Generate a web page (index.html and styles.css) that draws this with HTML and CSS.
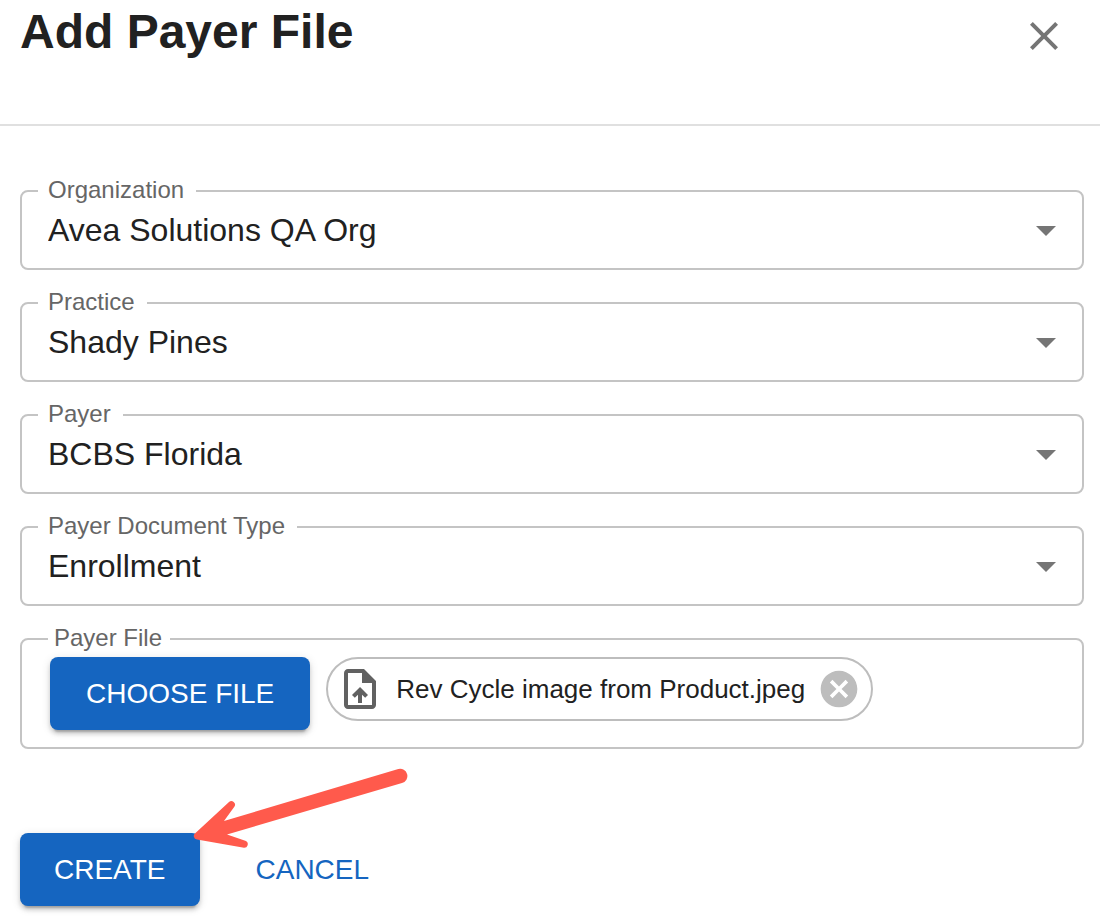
FILE: index.html
```html
<!DOCTYPE html>
<html lang="en">
<head>
  <meta charset="UTF-8">
  <meta name="viewport" content="width=device-width, initial-scale=1.0">
  <title>Add Payer File</title>
  <link rel="stylesheet" href="styles.css">
</head>
<body>
  <header>
    <h1>Add Payer File</h1>
    <button type="button" class="icon-btn" aria-label="Close">
      <svg class="icon" viewBox="0 0 24 24"><path d="M19 6.41L17.59 5 12 10.59 6.41 5 5 6.41 10.59 12 5 17.59 6.41 19 12 13.41 17.59 19 19 17.59 13.41 12z"/></svg>
    </button>
  </header>

  <form>
    <fieldset class="field">
      <legend><label for="organization">Organization</label></legend>
      <div class="select">
        <select id="organization">
          <option selected>Avea Solutions QA Org</option>
        </select>
        <svg class="icon" viewBox="0 0 24 24"><path d="M7 10l5 5 5-5z"/></svg>
      </div>
    </fieldset>

    <fieldset class="field">
      <legend><label for="practice">Practice</label></legend>
      <div class="select">
        <select id="practice">
          <option selected>Shady Pines</option>
        </select>
        <svg class="icon" viewBox="0 0 24 24"><path d="M7 10l5 5 5-5z"/></svg>
      </div>
    </fieldset>

    <fieldset class="field">
      <legend><label for="payer">Payer</label></legend>
      <div class="select">
        <select id="payer">
          <option selected>BCBS Florida</option>
        </select>
        <svg class="icon" viewBox="0 0 24 24"><path d="M7 10l5 5 5-5z"/></svg>
      </div>
    </fieldset>

    <fieldset class="field">
      <legend><label for="doc-type">Payer Document Type</label></legend>
      <div class="select">
        <select id="doc-type">
          <option selected>Enrollment</option>
        </select>
        <svg class="icon" viewBox="0 0 24 24"><path d="M7 10l5 5 5-5z"/></svg>
      </div>
    </fieldset>

    <fieldset class="field file-field">
      <legend>Payer File</legend>
      <div class="file-row">
        <button type="button" class="btn btn-primary">CHOOSE FILE</button>
        <div class="chip">
          <svg class="icon" viewBox="0 0 24 24"><path d="M14 2H6c-1.1 0-1.99.9-1.99 2L4 20c0 1.1.89 2 1.99 2H18c1.1 0 2-.9 2-2V8l-6-6zm4 18H6V4h7v5h5v11zM8 15.01l1.41 1.41L11 14.84V19h2v-4.16l1.59 1.59L16 15.01 12.01 11 8 15.01z"/></svg>
          <span>Rev Cycle image from Product.jpeg</span>
          <button type="button" class="icon-btn chip-delete" aria-label="Remove file">
            <svg class="icon" viewBox="0 0 24 24"><path d="M12 2C6.47 2 2 6.47 2 12s4.47 10 10 10 10-4.47 10-10S17.53 2 12 2zm5 13.59L15.59 17 12 13.41 8.41 17 7 15.59 10.59 12 7 8.41 8.41 7 12 10.59 15.59 7 17 8.41 13.41 12 17 15.59z"/></svg>
          </button>
        </div>
      </div>
    </fieldset>

    <div class="actions">
      <button type="submit" class="btn btn-primary">CREATE</button>
      <button type="button" class="btn btn-text">CANCEL</button>
      <!-- arrow pointing at the create button -->
      <svg class="pointer" viewBox="0 0 220 88"><path d="M34 56L208.300 4A7.200 7.200 0 0 1 212 18L37 69.500L56 76A3.600 3.600 0 0 1 54 82.700L7 74.500A3.500 3.500 0 0 1 5.500 68L39 37A3.600 3.600 0 0 1 44.500 41.500z"/></svg>
    </div>
  </form>
</body>
</html>
```

FILE: styles.css
```css
:root {
  --primary: #1565c0;
  --text: #212121;
  --text-muted: #666;
  --icon: #757575;
  --border: #c4c4c4;
}

* {
  box-sizing: border-box;
  margin: 0;
  padding: 0;
  font-family: "Liberation Sans", Arial, sans-serif;
}

body {
  background: #fff;
  color: var(--text);
}

header {
  display: flex;
  justify-content: space-between;
  align-items: flex-start;
  height: 126px;
  padding: 4px 32px 0 20px;
  border-bottom: 2px solid #e0e0e0;
}
h1 {
  font-size: 48px;
  line-height: 56px;
}

.icon {
  display: block;
  flex-shrink: 0;
  width: 48px;
  height: 48px;
  fill: var(--icon);
}
.icon-btn {
  margin-top: 8px;
  border: none;
  background: none;
  cursor: pointer;
}

form {
  display: flex;
  flex-direction: column;
  gap: 21px;
  padding: 53px 16px 16px 20px;
}

.field {
  min-width: 0;
  padding-bottom: 10px;
  border: 2px solid var(--border);
  border-radius: 8px;
}
.field legend {
  margin-left: 16px;
  padding: 0 12px 2px 10px;
  font-size: 24px;
  line-height: 22px;
  color: var(--text-muted);
}

.select {
  position: relative;
}
.select select {
  display: block;
  width: 100%;
  height: 55px;
  padding: 0 64px 2px 26px;
  border: none;
  outline: none;
  background: none;
  appearance: none;
  font-size: 32px;
  color: var(--text);
}
.select .icon {
  position: absolute;
  top: 3px;
  right: 12px;
  pointer-events: none;
}

.file-field {
  padding: 6px 28px 17px;
}
.file-field legend {
  margin-left: -2px;
  padding: 0 8px 2px 6px;
}
.file-row {
  display: flex;
  align-items: flex-start;
  gap: 16px;
}

.btn {
  height: 73px;
  padding: 0 34px;
  border: none;
  border-radius: 8px;
  font-size: 28px;
  cursor: pointer;
}
.file-row .btn {
  padding: 0 36px;
}
.btn-primary {
  background: var(--primary);
  color: #fff;
  box-shadow: 0 6px 2px -4px rgba(0, 0, 0, 0.2), 0 4px 4px rgba(0, 0, 0, 0.14), 0 2px 10px rgba(0, 0, 0, 0.12);
}
.btn-text {
  background: none;
  color: var(--primary);
}

.chip {
  display: flex;
  align-items: center;
  height: 64px;
  padding: 0 10px 0 8px;
  border: 2px solid #bdbdbd;
  border-radius: 32px;
  font-size: 26px;
}
.chip > .icon {
  fill: #616161;
}
.chip span {
  padding: 0 12px;
}
.chip-delete {
  margin: 0;
}
.chip-delete .icon {
  width: 44px;
  height: 44px;
  fill: #bdbdbd;
}

.actions {
  position: relative;
  display: flex;
  gap: 22px;
  margin-top: 63px;
}

.pointer {
  position: absolute;
  top: -68px;
  left: 170px;
  width: 220px;
  height: 88px;
  fill: #ff5a4c;
  pointer-events: none;
}
```
